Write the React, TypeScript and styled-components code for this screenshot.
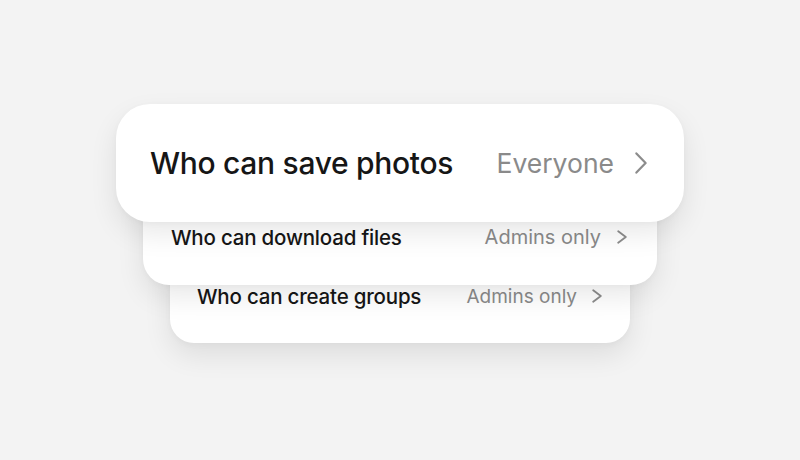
import React from 'react';
import styled, { createGlobalStyle } from 'styled-components';

type Level = 'front' | 'middle' | 'back';

interface Setting {
    id: string;
    level: Level;
    title: string;
    value: string;
}

const settings: Setting[] = [
    { id: 'photos', level: 'front', title: 'Who can save photos', value: 'Everyone' },
    { id: 'files', level: 'middle', title: 'Who can download files', value: 'Admins only' },
    { id: 'groups', level: 'back', title: 'Who can create groups', value: 'Admins only' },
];

// card geometry per layer of the stack
const geo = {
    front: { width: 568, height: 118, overlap: 0, padTop: 0, padX: 34, padR: 37, radius: 34, title: 30, value: 26.5, gap: 21, z: 3, chevW: 12, chevH: 22, stroke: 2.2, spacing: -0.3 },
    middle: { width: 514, height: 107, overlap: 44, padTop: 47, padX: 28, padR: 30, radius: 26, title: 20.5, value: 20, gap: 16, z: 2, chevW: 10, chevH: 14, stroke: 1.8, spacing: -0.2 },
    back: { width: 460, height: 96, overlap: 38, padTop: 37, padX: 27, padR: 28, radius: 24, title: 20.5, value: 19, gap: 15, z: 1, chevW: 10, chevH: 14, stroke: 1.8, spacing: -0.2 },
};

const Chevron = ({ level }: { level: Level }) => {
    const { chevW: w, chevH: h, stroke } = geo[level];
    const p = stroke / 2 + 0.3;
    return (
        <svg width={w} height={h} viewBox={`0 0 ${w} ${h}`} fill="none">
            <polyline
                points={`${p},${p} ${w - p},${h / 2} ${p},${h - p}`}
                stroke="#8c8c8c"
                strokeWidth={stroke}
                strokeLinecap="round"
                strokeLinejoin="round"
            />
        </svg>
    );
};

const SettingCard = ({ level, title, value }: Setting) => (
    <Card $level={level}>
        <Row $level={level}>
            <Title $level={level}>{title}</Title>
            <Value $level={level}>
                {value}
                <Chevron level={level} />
            </Value>
        </Row>
    </Card>
);

const App = () => (
    <>
        <GlobalStyle />
        <Page>
            <Stack>
                {settings.map((s) => (
                    <SettingCard key={s.id} {...s} />
                ))}
            </Stack>
        </Page>
    </>
);

export default App;

const GlobalStyle = createGlobalStyle`
    html, body {
        margin: 0;
        padding: 0;
        background: #f3f3f3;
    }
    body {
        font-family: Inter, 'Noto Sans', sans-serif;
        -webkit-font-smoothing: antialiased;
    }
`;

const Page = styled.div`
    width: 800px;
    height: 460px;
    box-sizing: border-box;
    padding-top: 104px;
    overflow: hidden;
`;

const Stack = styled.div`
    display: flex;
    flex-direction: column;
    align-items: center;
`;

const Card = styled.div<{ $level: Level }>`
    position: relative;
    box-sizing: border-box;
    width: ${({ $level }) => geo[$level].width}px;
    height: ${({ $level }) => geo[$level].height}px;
    margin-top: -${({ $level }) => geo[$level].overlap}px;
    padding: ${({ $level }) => geo[$level].padTop}px ${({ $level }) => geo[$level].padR}px 0
        ${({ $level }) => geo[$level].padX}px;
    border-radius: ${({ $level }) => geo[$level].radius}px;
    background: #ffffff;
    z-index: ${({ $level }) => geo[$level].z};
    box-shadow: 0 12px 28px rgba(0, 0, 0, 0.09), 0 2px 6px rgba(0, 0, 0, 0.03);
    display: flex;
    flex-direction: column;
    justify-content: ${({ $level }) => ($level === 'front' ? 'center' : 'flex-start')};
`;

const Row = styled.div<{ $level: Level }>`
    display: flex;
    align-items: center;
    justify-content: space-between;
    height: ${({ $level }) => ($level === 'front' ? 40 : 24)}px;
`;

const Title = styled.div<{ $level: Level }>`
    font-size: ${({ $level }) => geo[$level].title}px;
    font-weight: 500;
    color: #161616;
    letter-spacing: ${({ $level }) => geo[$level].spacing}px;
`;

const Value = styled.div<{ $level: Level }>`
    display: flex;
    align-items: center;
    gap: ${({ $level }) => geo[$level].gap}px;
    font-size: ${({ $level }) => geo[$level].value}px;
    font-weight: 400;
    color: #8a8a8a;
`;
